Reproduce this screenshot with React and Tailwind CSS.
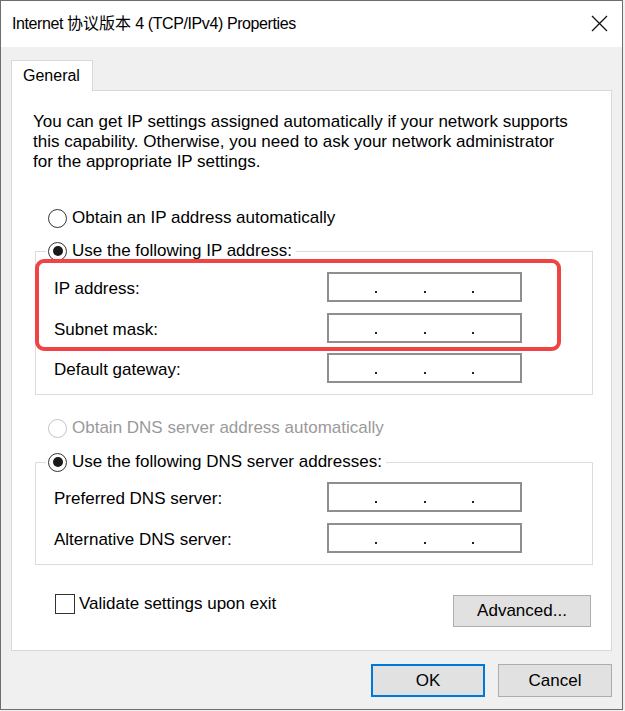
import React from "react";

function Radio({ checked, disabled }) {
  return (
    <span
      className={
        "w-[19px] h-[19px] rounded-full border-[1.5px] bg-white flex items-center justify-center shrink-0 " +
        (disabled ? "border-[#c4c4c4]" : "border-[#333333]")
      }
    >
      {checked ? <span className="w-[10px] h-[10px] rounded-full bg-[#1a1a1a]" /> : null}
    </span>
  );
}

function IpBox() {
  return (
    <div className="w-[195px] h-[30px] border-2 border-[#8e8e8e] bg-white flex">
      <div className="flex-1" />
      <div className="w-[2px] flex flex-col justify-end pb-[7px]">
        <span className="w-[2px] h-[2px] bg-[#222]" />
      </div>
      <div className="flex-1" />
      <div className="w-[2px] flex flex-col justify-end pb-[7px]">
        <span className="w-[2px] h-[2px] bg-[#222]" />
      </div>
      <div className="flex-1" />
      <div className="w-[2px] flex flex-col justify-end pb-[7px]">
        <span className="w-[2px] h-[2px] bg-[#222]" />
      </div>
      <div className="flex-1" />
    </div>
  );
}

function Row({ label, className = "" }) {
  return (
    <div className={"flex items-center h-[30px] " + className}>
      <span className="w-[273px] leading-[20px] mt-[4px]">{label}</span>
      <IpBox />
    </div>
  );
}

function Group({ legend, children, className = "" }) {
  return (
    <fieldset className={"w-[558px] border border-[#dcdcdc] pl-[10px] pr-[10px] pb-[11px] " + className}>
      <legend className="px-[2px] h-[22px] flex items-center bg-white">
        <span className="flex items-center gap-[5px] pr-[2px]">
          <Radio checked />
          <span className="leading-[20px]">{legend}</span>
        </span>
      </legend>
      {children}
    </fieldset>
  );
}

export default function App() {
  return (
    <div className="w-[625px] h-[711px] bg-[#f0f0f0] relative font-['Liberation_Sans',Arial,sans-serif] text-[17px] text-black">
      <div className="w-[623px] h-[710px] border border-[#6e6e6e] bg-[#f0f0f0] flex flex-col">
        {/* Title bar */}
        <div className="h-[46px] bg-white flex items-center justify-between pl-[11px] pr-[14px] shrink-0">
          <span className="text-[16px] tracking-[-0.4px] font-['Liberation_Sans','Noto_Sans_CJK_SC',sans-serif] leading-[24px] text-black">
            Internet <span className="text-[16px] tracking-normal">协议版本</span> 4 (TCP/IPv4) Properties
          </span>
          <svg width="17" height="17" viewBox="0 0 17 17" className="mb-[1px]">
            <path d="M1 1 L16 16 M16 1 L1 16" stroke="#111" strokeWidth="1.3" fill="none" />
          </svg>
        </div>

        {/* Body */}
        <div className="flex-1 flex flex-col pl-[10px] pr-[10px] pt-[13px]">
          {/* Tab */}
          <div className="flex">
            <div className="w-[82px] h-[31px] bg-white border border-b-0 border-[#d9d9d9] -mb-px relative z-10 pl-[11px] flex items-center">
              <span className="leading-[20px] text-[16px]">General</span>
            </div>
          </div>

          {/* Panel */}
          <div className="w-[601px] h-[561px] bg-white border border-[#d9d9d9] pl-[21px] pt-[21px] flex flex-col">
            <p className="leading-[20px]">
              You can get IP settings assigned automatically if your network supports
              <br />
              this capability. Otherwise, you need to ask your network administrator
              <br />
              for the appropriate IP settings.
            </p>

            <div className="mt-[36px] ml-[15px] h-[20px] flex items-center gap-[5px]">
              <Radio />
              <span className="leading-[20px]">Obtain an IP address automatically</span>
            </div>

            <Group legend="Use the following IP address:" className="mt-[12px] ml-[2px]">
              <div className="pt-[10px] pl-[8px] flex flex-col">
                <Row label="IP address:" />
                <Row label="Subnet mask:" className="mt-[11px]" />
                <Row label="Default gateway:" className="mt-[10px]" />
              </div>
            </Group>

            <div className="mt-[23px] ml-[15px] h-[20px] flex items-center gap-[5px]">
              <Radio disabled />
              <span className="leading-[20px] text-[#9a9a9a]">Obtain DNS server address automatically</span>
            </div>

            <Group legend="Use the following DNS server addresses:" className="mt-[13px] ml-[2px]">
              <div className="pt-[9px] pl-[8px] flex flex-col">
                <Row label="Preferred DNS server:" />
                <Row label="Alternative DNS server:" className="mt-[11px]" />
              </div>
            </Group>

            <div className="mt-[29px] ml-[2px] w-[558px] flex items-start justify-between">
              <div className="ml-[20px] flex items-center gap-[4px] h-[20px]">
                <span className="w-[20px] h-[20px] border-[1.5px] border-[#333] bg-white shrink-0" />
                <span className="leading-[20px]">Validate settings upon exit</span>
              </div>
              <button className="mt-[1px] mr-[2px] w-[138px] h-[32px] bg-[#e1e1e1] border border-[#adadad] flex items-center justify-center leading-[20px]">
                Advanced...
              </button>
            </div>
          </div>

          {/* Dialog buttons */}
          <div className="mt-[13px] flex justify-end gap-[13px]">
            <button className="w-[114px] h-[33px] bg-[#e1e1e1] border-2 border-[#0078d7] flex items-center justify-center leading-[20px]">
              OK
            </button>
            <button className="w-[114px] h-[33px] bg-[#e1e1e1] border border-[#adadad] flex items-center justify-center leading-[20px]">
              Cancel
            </button>
          </div>
        </div>
      </div>

      {/* Red highlight annotation */}
      <div className="absolute left-[35px] top-[259px] w-[526px] h-[92px] border-[4px] border-[#f04444] rounded-[9px] pointer-events-none" />
    </div>
  );
}
